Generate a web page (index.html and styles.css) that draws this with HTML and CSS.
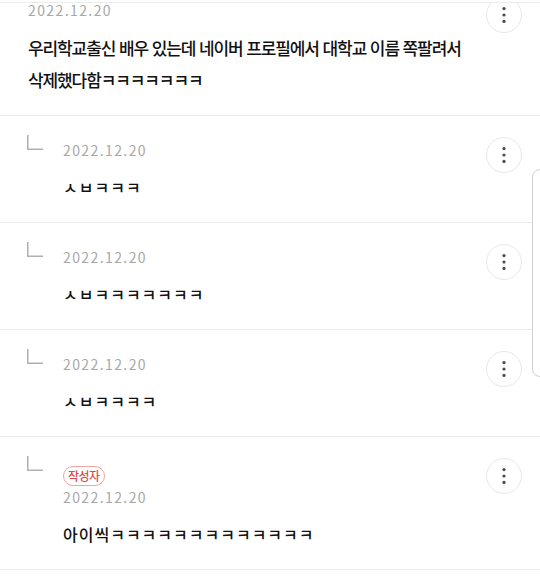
FILE: index.html
```html
<!DOCTYPE html>
<html lang="ko">

<head>
  <meta charset="UTF-8">
  <meta name="viewport" content="width=device-width, initial-scale=1.0">
  <title>댓글</title>
  <link rel="stylesheet" href="styles.css">
</head>

<body>
  <header class="topbar"></header>

  <main class="comments">
    <article class="comment">
      <div class="comment-head">
        <span class="date">2022.12.20</span>
        <button class="more" type="button" aria-label="더보기">
          <svg width="4" height="16" viewBox="0 0 4 16"><circle cx="2" cy="1.6" r="1.6"/><circle cx="2" cy="8" r="1.6"/><circle cx="2" cy="14.4" r="1.6"/></svg>
        </button>
      </div>
      <p class="comment-text">우리학교출신 배우 있는데 네이버 프로필에서 대학교 이름 쪽팔려서 삭제했다함ㅋㅋㅋㅋㅋㅋㅋ</p>
    </article>

    <article class="reply">
      <svg class="reply-mark" width="16" height="15" viewBox="0 0 16 15"><path d="M0.75 0 V14.25 H16"/></svg>
      <div class="reply-body">
        <span class="date">2022.12.20</span>
        <p class="reply-text">ㅅㅂㅋㅋㅋ</p>
      </div>
      <button class="more" type="button" aria-label="더보기">
        <svg width="4" height="16" viewBox="0 0 4 16"><circle cx="2" cy="1.6" r="1.6"/><circle cx="2" cy="8" r="1.6"/><circle cx="2" cy="14.4" r="1.6"/></svg>
      </button>
    </article>

    <article class="reply">
      <svg class="reply-mark" width="16" height="15" viewBox="0 0 16 15"><path d="M0.75 0 V14.25 H16"/></svg>
      <div class="reply-body">
        <span class="date">2022.12.20</span>
        <p class="reply-text">ㅅㅂㅋㅋㅋㅋㅋㅋㅋ</p>
      </div>
      <button class="more" type="button" aria-label="더보기">
        <svg width="4" height="16" viewBox="0 0 4 16"><circle cx="2" cy="1.6" r="1.6"/><circle cx="2" cy="8" r="1.6"/><circle cx="2" cy="14.4" r="1.6"/></svg>
      </button>
    </article>

    <article class="reply">
      <svg class="reply-mark" width="16" height="15" viewBox="0 0 16 15"><path d="M0.75 0 V14.25 H16"/></svg>
      <div class="reply-body">
        <span class="date">2022.12.20</span>
        <p class="reply-text">ㅅㅂㅋㅋㅋㅋ</p>
      </div>
      <button class="more" type="button" aria-label="더보기">
        <svg width="4" height="16" viewBox="0 0 4 16"><circle cx="2" cy="1.6" r="1.6"/><circle cx="2" cy="8" r="1.6"/><circle cx="2" cy="14.4" r="1.6"/></svg>
      </button>
    </article>

    <article class="reply">
      <svg class="reply-mark" width="16" height="15" viewBox="0 0 16 15"><path d="M0.75 0 V14.25 H16"/></svg>
      <div class="reply-body">
        <span class="badge">작성자</span>
        <span class="date">2022.12.20</span>
        <p class="reply-text">아이씩ㅋㅋㅋㅋㅋㅋㅋㅋㅋㅋㅋㅋㅋ</p>
      </div>
      <button class="more" type="button" aria-label="더보기">
        <svg width="4" height="16" viewBox="0 0 4 16"><circle cx="2" cy="1.6" r="1.6"/><circle cx="2" cy="8" r="1.6"/><circle cx="2" cy="14.4" r="1.6"/></svg>
      </button>
    </article>
  </main>

  <div class="scroll-thumb"></div>
</body>

</html>
```

FILE: styles.css
```css
body {
  font-family: "Noto Sans CJK KR", "Noto Sans", sans-serif;
  margin: 0;
  padding: 0;
  background-color: #fff;
  color: #111;
  overflow: hidden;
  word-break: keep-all;
}

.topbar {
  position: fixed;
  top: 0;
  left: 0;
  right: 0;
  height: 2px;
  background-color: #fff;
  border-bottom: 1px solid #ececec;
  z-index: 2;
}

.comments {
  margin-top: -24px;
}

.comment {
  padding: 25px 18px 19px 28px;
  border-bottom: 1px solid #ececec;
}

.comment-head {
  display: flex;
  justify-content: space-between;
  align-items: flex-start;
  height: 18px;
}

.comment-head .more {
  margin-top: -4px;
}

.comment-text {
  margin: 13px 0 0;
  font-size: 17px;
  font-weight: 500;
  line-height: 32px;
  letter-spacing: -1.1px;
}

.date {
  display: block;
  font-size: 14px;
  line-height: 18px;
  letter-spacing: 1.4px;
  color: #a8a8a8;
}

.reply {
  display: flex;
  align-items: flex-start;
  padding: 19px 18px 24px 27px;
  border-bottom: 1px solid #ececec;
}

.reply-mark {
  flex: none;
  margin-right: 20px;
  fill: none;
  stroke: #b0b0b0;
  stroke-width: 1.5;
}

.reply-body {
  flex: 1;
  margin-top: 6px;
}

.reply-text {
  margin: 17px 0 0;
  font-size: 16px;
  font-weight: 500;
  line-height: 22px;
  letter-spacing: 1px;
}

.badge {
  display: inline-block;
  height: 18px;
  line-height: 18px;
  padding: 0 4px;
  margin-bottom: 2px;
  border: 1px solid #f0a3a3;
  border-radius: 10px;
  font-size: 12px;
  font-weight: 500;
  letter-spacing: -0.5px;
  color: #e04a4a;
}

.more {
  flex: none;
  display: flex;
  align-items: center;
  justify-content: center;
  width: 36px;
  height: 36px;
  margin-top: 2px;
  padding: 0;
  border: 1px solid #e8e8e8;
  border-radius: 50%;
  background-color: #fff;
  fill: #4a4a4a;
  cursor: pointer;
}

.scroll-thumb {
  position: fixed;
  top: 169px;
  left: 532px;
  width: 20px;
  height: 206px;
  border: 1px solid #cfcfcf;
  border-radius: 8px;
  background-color: #fff;
  z-index: 3;
}
```
